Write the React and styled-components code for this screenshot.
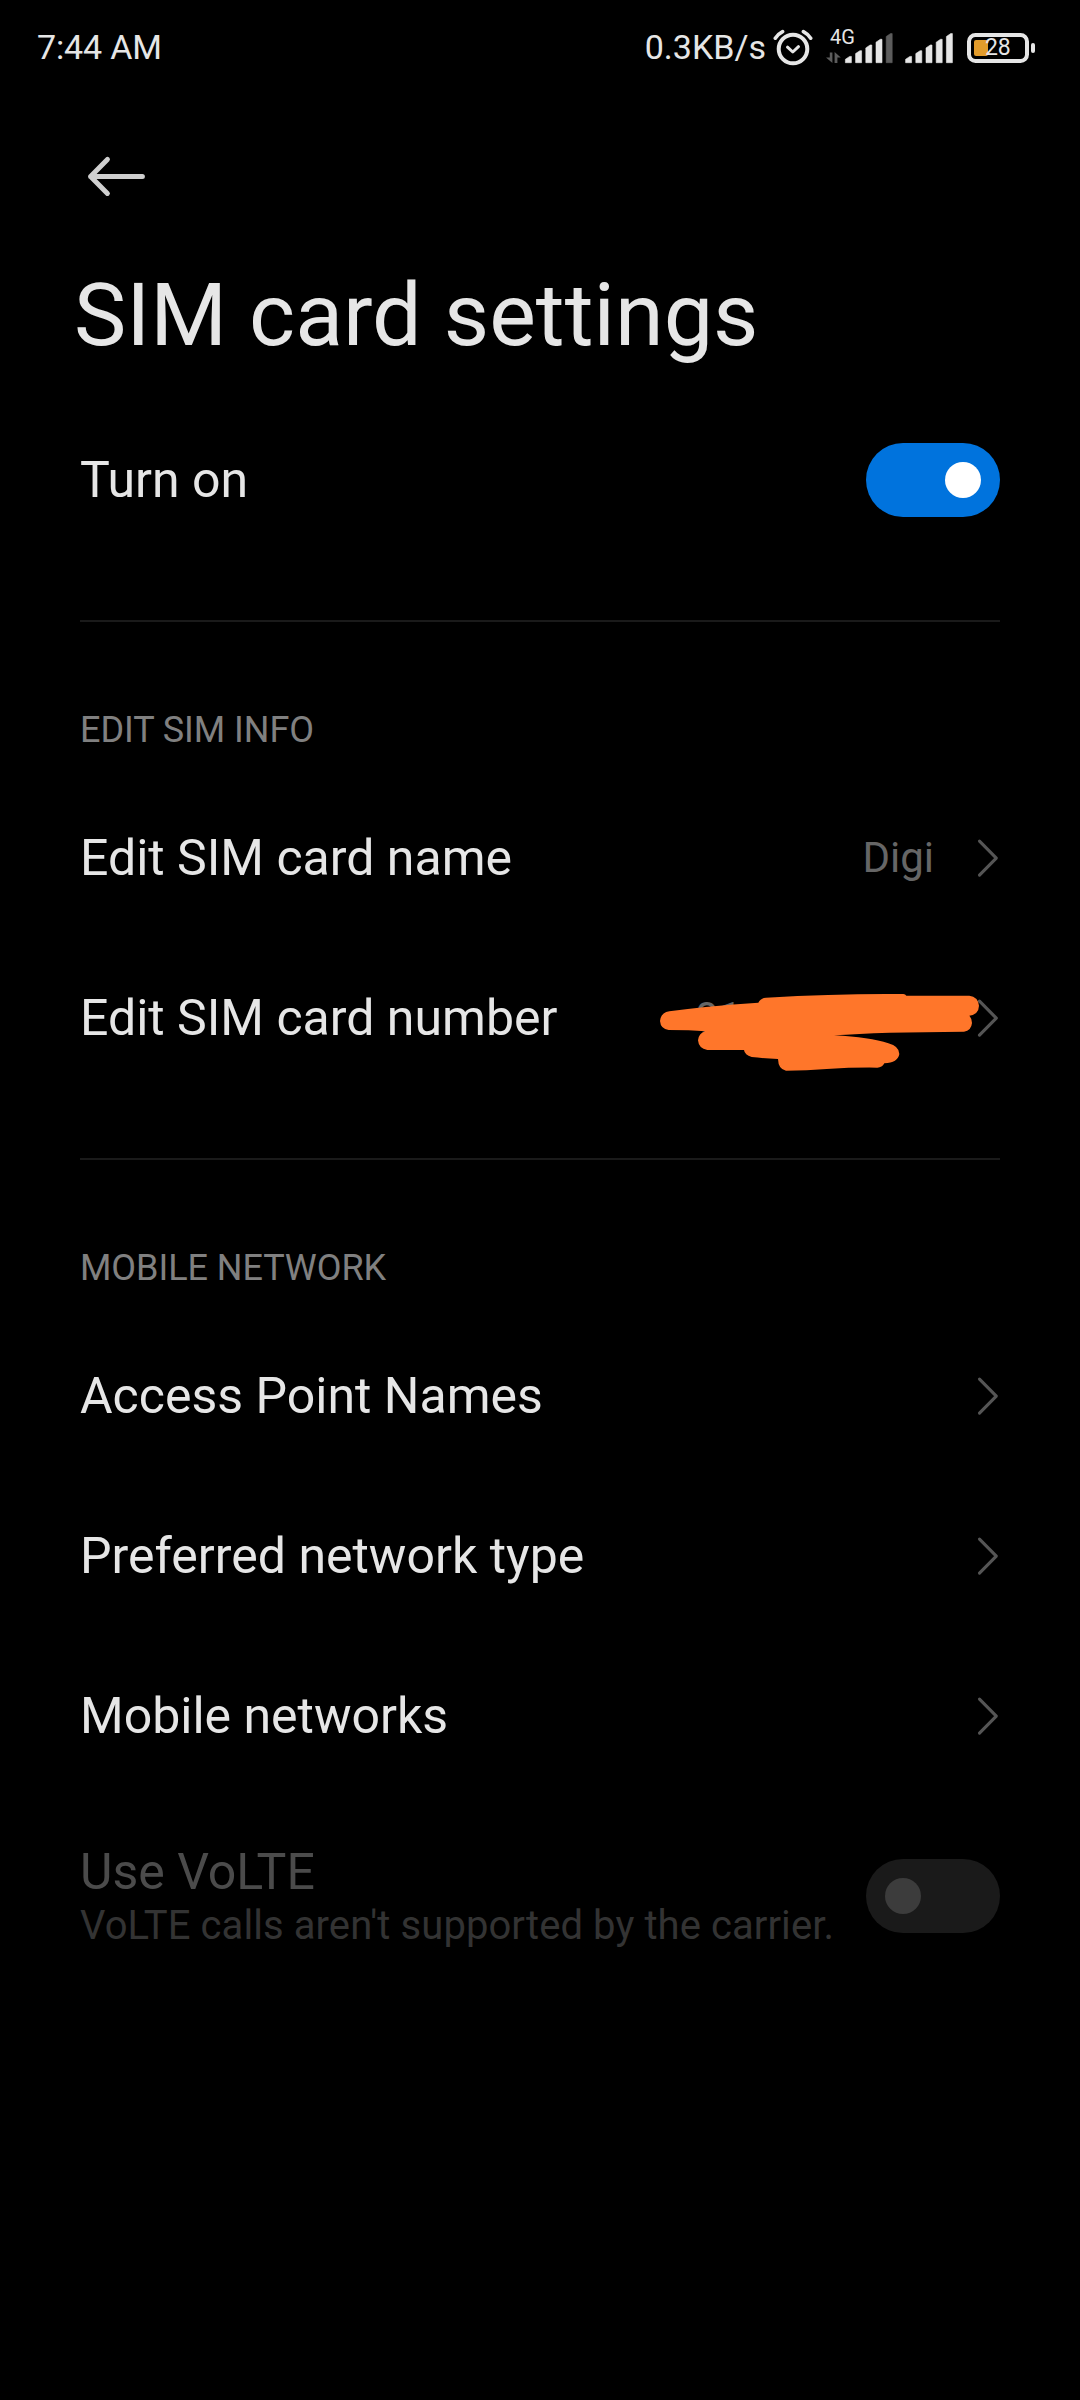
import React, { useState } from 'react';
import styled, { createGlobalStyle } from 'styled-components';

const GlobalStyle = createGlobalStyle`
  * {
    box-sizing: border-box;
  }
  body {
    margin: 0;
    background: #000;
    font-family: Roboto, 'Noto Sans', sans-serif;
  }
`;

const Screen = styled.div`
  width: 1080px;
  height: 2400px;
  background: #000;
  color: #e6e6e6;
  overflow: hidden;
`;

const StatusBar = styled.header`
  height: 96px;
  padding: 0 44px 0 37px;
  display: flex;
  justify-content: space-between;
  align-items: center;
  font-size: 34px;
  line-height: 40px;
`;

const StatusIcons = styled.div`
  display: flex;
  align-items: center;
`;

const Clock = styled.span`
  margin-bottom: 2px;
  letter-spacing: -0.15px;
`;

const Speed = styled.span`
  margin: 0 7px 2px 0;
`;

const AlarmIcon = styled.svg`
  width: 40px;
  height: 40px;
  margin-right: 12px;
`;

const Network = styled.div`
  width: 68px;
  height: 36px;
  margin-right: 12px;
  position: relative;
`;

const NetworkType = styled.span`
  position: absolute;
  left: 5px;
  top: -3px;
  font-size: 20px;
  line-height: 20px;
`;

const Signal = styled.svg`
  display: block;
  width: ${({ width }) => width}px;
  height: 36px;
`;

const Battery = styled.div`
  width: 69px;
  height: 36px;
  margin-left: 13px;
  position: relative;
`;

const BatteryLevel = styled.span`
  position: absolute;
  left: 18px;
  top: 6px;
  font-size: 23px;
  line-height: 24px;
  letter-spacing: -0.2px;
`;

const TopBar = styled.div`
  height: 160px;
  padding: 0 80px;
  display: flex;
  align-items: center;
`;

const BackButton = styled.button`
  width: 72px;
  height: 72px;
  padding: 0;
  border: none;
  background: none;
`;

const Title = styled.h1`
  height: 144px;
  margin: 0;
  padding: 7px 0 0 74px;
  font-size: 88px;
  font-weight: 400;
  line-height: 104px;
  letter-spacing: 0.05px;
`;

const List = styled.main`
  padding: 0 80px;
`;

const Row = styled.div`
  height: ${({ tall }) => (tall ? '200px' : '160px')};
  display: flex;
  align-items: center;
  position: relative;
`;

const RowText = styled.div`
  flex: 1;
  display: flex;
  flex-direction: column;
`;

const Label = styled.span`
  font-size: 50px;
  line-height: 58px;
  color: ${({ disabled }) => (disabled ? '#4b4b4b' : '#e6e6e6')};
`;

const Summary = styled.span`
  margin-bottom: -2px;
  font-size: 40px;
  line-height: 50px;
  letter-spacing: 0.08px;
  color: #333;
  white-space: nowrap;
`;

const Value = styled.span`
  min-width: ${({ width }) => (width ? `${width}px` : '0')};
  margin-right: 42px;
  font-size: 42px;
  line-height: 48px;
  color: #666;
`;

const ChevronIcon = styled.svg`
  width: 24px;
  height: 40px;
`;

const Divider = styled.hr`
  height: 2px;
  margin: 60px 0 0;
  border: none;
  background: #1a1a1a;
`;

const SectionTitle = styled.h2`
  height: 156px;
  margin: 0;
  padding-top: 86px;
  font-size: 36px;
  font-weight: 400;
  line-height: 44px;
  letter-spacing: -0.06px;
  color: #808080;
`;

const Toggle = styled.button`
  width: 134px;
  height: 74px;
  padding: 0 19px;
  border: none;
  border-radius: 37px;
  display: flex;
  align-items: center;
  justify-content: ${({ $on }) => ($on ? 'flex-end' : 'flex-start')};
  background: ${({ $on }) => ($on ? '#0073dd' : '#1a1a1a')};
`;

const Knob = styled.span`
  width: 36px;
  height: 36px;
  border-radius: 50%;
  background: ${({ $on }) => ($on ? '#fff' : '#3c3c3c')};
`;

const Scribble = styled.svg`
  position: absolute;
  left: 580px;
  top: 52px;
  width: 320px;
  height: 90px;
`;

const Alarm = () => (
  <AlarmIcon viewBox="0 0 40 40" fill="none" stroke="#e6e6e6" strokeLinecap="round" strokeLinejoin="round">
    <circle cx="20" cy="21" r="14.3" strokeWidth="4" />
    <path d="M14.5 19.2 L19.8 24 L25.5 18.7" strokeWidth="3" />
    <path d="M2.3 10.2 Q5.3 5.8 9.6 3.6 M37.7 10.2 Q34.7 5.8 30.4 3.6" strokeWidth="3.6" />
  </AlarmIcon>
);

// each bar has a clipped corner, the tallest one may be dimmed
const bars = [0, 1, 2, 3, 4];

const Bars = ({ x, level }) =>
  bars.map((i) => {
    const left = x + i * 10.2;
    const top = 26.4 - i * 5.7;
    return (
      <path
        key={i}
        d={`M${left} ${top + 2.9} L${left + 4.3} ${top} H${left + 6} V32.7 H${left} Z`}
        fill={i < level ? '#e6e6e6' : '#5c5c5c'}
        stroke={i < level ? '#e6e6e6' : '#5c5c5c'}
        strokeWidth="0.6"
        strokeLinejoin="round"
      />
    );
  });

const Chevron = () => (
  <ChevronIcon viewBox="0 0 24 40" fill="none" stroke="#555" strokeWidth="3.1" strokeLinecap="round" strokeLinejoin="round">
    <path d="M3.5 3.2 L20.3 20.2 L3.5 37.2" />
  </ChevronIcon>
);

const Switch = ({ defaultOn, disabled }) => {
  const [on, setOn] = useState(defaultOn);

  return (
    <Toggle $on={on} disabled={disabled} onClick={() => setOn(!on)}>
      <Knob $on={on} />
    </Toggle>
  );
};

const networkItems = ['Access Point Names', 'Preferred network type', 'Mobile networks'];

const App = () => {
  return (
    <>
      <GlobalStyle />
      <Screen>
        <StatusBar>
          <Clock>7:44 AM</Clock>
          <StatusIcons>
            <Speed>0.3KB/s</Speed>
            <Alarm />
            <Network>
              <NetworkType>4G</NetworkType>
              <Signal width={68} viewBox="0 0 68 36">
                <path d="M4.8 22.5 H7.4 V33 L1 27.4 H4.8 Z M9.6 22 L15.8 27.6 H12.4 V33 H9.6 Z" fill="#5c5c5c" />
                <Bars x={20.4} level={4} />
              </Signal>
            </Network>
            <Signal width={49} viewBox="0 0 49 36">
              <Bars x={0.6} level={5} />
            </Signal>
            <Battery>
              <Signal width={69} viewBox="0 0 69 36">
                <rect x="2" y="5" width="58" height="26" rx="6.5" fill="none" stroke="#e6e6e6" strokeWidth="4" />
                <rect x="7" y="10" width="14" height="16" rx="2" fill="#e39c2b" />
                <rect x="64" y="13" width="4" height="10" rx="2" fill="#e6e6e6" />
              </Signal>
              <BatteryLevel>28</BatteryLevel>
            </Battery>
          </StatusIcons>
        </StatusBar>
        <TopBar>
          <BackButton aria-label="Back">
            <svg width="72" height="72" fill="none" stroke="#cfcfcf" strokeWidth="5" strokeLinecap="round" strokeLinejoin="round">
              <path d="M27.4 19.4 L10.6 36.4 L27.4 53.4 M10.6 36.4 H62.4" />
            </svg>
          </BackButton>
        </TopBar>
        <Title>SIM card settings</Title>
        <List>
          <Row>
            <RowText>
              <Label>Turn on</Label>
            </RowText>
            <Switch defaultOn />
          </Row>
          <Divider />
          <SectionTitle>EDIT SIM INFO</SectionTitle>
          <Row>
            <RowText>
              <Label>Edit SIM card name</Label>
            </RowText>
            <Value>Digi</Value>
            <Chevron />
          </Row>
          <Row>
            <RowText>
              <Label>Edit SIM card number</Label>
            </RowText>
            <Value width={239}>01</Value>
            <Chevron />
            {/* marker strokes hiding the number */}
            <Scribble viewBox="60 570 960 270">
              <path
                fill="#ff762a"
                d="M88 634 Q200 618 355 608 Q362 594 378 593 Q600 580 790 582 Q796 583 799 587 H988 Q1014 590 1017 617 Q1016 643 988 647 Q996 656 996 669 Q994 692 972 695 Q720 696 582 706 Q690 712 745 730 Q778 739 778 762 Q774 788 733 790 Q726 803 712 803 Q640 802 560 807 Q500 812 438 812 Q415 808 414 777 Q370 775 335 771 Q314 765 312 750 H202 Q176 746 174 721 Q176 700 196 694 Q150 690 86 690 Q62 687 60 663 Q62 638 88 634 Z"
              />
            </Scribble>
          </Row>
          <Divider />
          <SectionTitle>MOBILE NETWORK</SectionTitle>
          {networkItems.map((item) => (
            <Row key={item}>
              <RowText>
                <Label>{item}</Label>
              </RowText>
              <Chevron />
            </Row>
          ))}
          <Row tall>
            <RowText>
              <Label disabled>Use VoLTE</Label>
              <Summary>VoLTE calls aren't supported by the carrier.</Summary>
            </RowText>
            <Switch defaultOn={false} disabled />
          </Row>
        </List>
      </Screen>
    </>
  );
};

export default App;
